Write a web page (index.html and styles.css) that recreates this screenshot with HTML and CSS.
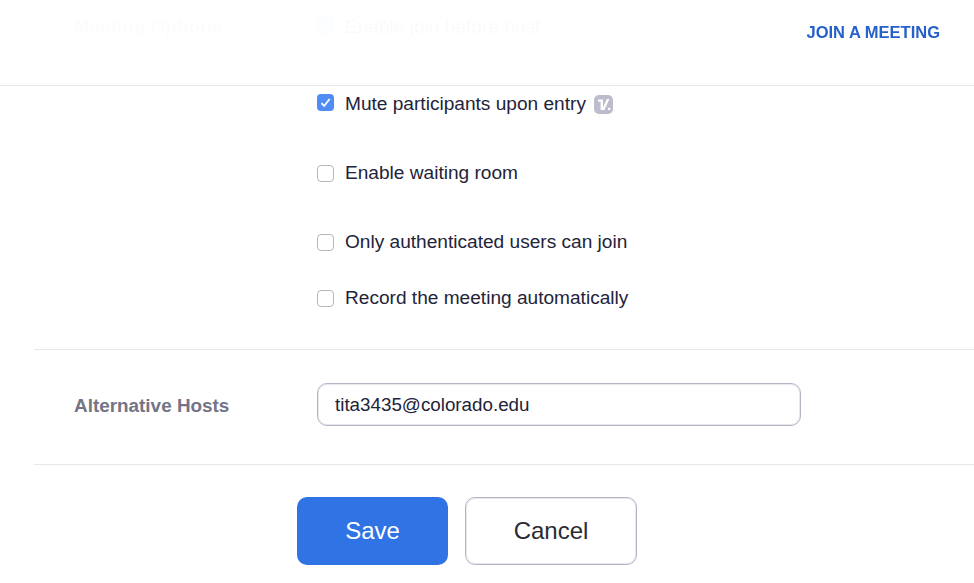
FILE: index.html
```html
<!DOCTYPE html>
<html lang="en">
    <head>
        <meta charset="UTF-8">
        <title>Meeting Options</title>
        <link rel="stylesheet" href="styles.css">
    </head>
    <body>
        <header class="topbar">
            <a class="join-link" href="#">JOIN A MEETING</a>
        </header>
        <main class="content">
            <section class="section section-options">
                <div class="section-label">Meeting Options</div>
                <div class="option-list">
                    <label class="option option-join">
                        <span class="box box-checked">
                            <svg viewBox="0 0 17 17" width="17" height="17"><path d="M4.4 9.2 7.2 12 12.6 5" fill="none" stroke="#fff" stroke-width="1.8"/></svg>
                        </span>
                        Enable join before host
                    </label>
                    <label class="option option-mute">
                        <span class="box box-checked">
                            <svg viewBox="0 0 17 17" width="17" height="17"><path d="M4.4 9.2 7.2 12 12.6 5" fill="none" stroke="#fff" stroke-width="1.8"/></svg>
                        </span>
                        Mute participants upon entry
                        <span class="info-badge">
                            <svg viewBox="0 0 19 19" width="19" height="19"><path d="M4.2 4.5H9V12.4L12.9 4H15.4L10.4 15H6.6V6.8H4.2ZM14 12.8H16.3V15H14Z" fill="#fff"/></svg>
                        </span>
                    </label>
                    <label class="option option-waiting">
                        <span class="box"></span>
                        Enable waiting room
                    </label>
                    <label class="option option-auth">
                        <span class="box"></span>
                        Only authenticated users can join
                    </label>
                    <label class="option option-record">
                        <span class="box"></span>
                        Record the meeting automatically
                    </label>
                </div>
            </section>
            <section class="section section-hosts">
                <div class="section-label">Alternative Hosts</div>
                <input class="host-input" type="text" value="tita3435@colorado.edu">
            </section>
            <div class="actions">
                <button class="button button-save">Save</button>
                <button class="button button-cancel">Cancel</button>
            </div>
        </main>
    </body>
</html>
```
FILE: styles.css
```css
*
{
    box-sizing: border-box;
    margin: 0;
    padding: 0;
}

html,
body
{
    height: 583px;
    overflow: hidden;
}

body
{
    background: #fff;
    color: #23233a;
    font-family: "Liberation Sans", Arial, sans-serif;
    font-size: 19.1px;
}

.topbar
{
    position: fixed;
    z-index: 2;

    top: 0;
    left: 0;
    right: 0;
    height: 86px;

    display: flex;
    justify-content: flex-end;
    padding: 22px 34px 0 0;

    background: rgba( 255, 255, 255, 0.98 );
    border-bottom: 1px solid #e8e8ea;
}

.join-link
{
    color: #2561c9;
    font-size: 16.5px;
    font-weight: bold;
    line-height: 20px;
    text-decoration: none;
}

.content
{
    padding: 16px 0 0 34px;
}

.section
{
    display: grid;
    grid-template-columns: 283px 1fr;
    border-bottom: 1px solid #e8e8ea;
}

.section-label
{
    padding-left: 40px;
    color: #747487;
    font-size: 18.9px;
    font-weight: bold;
    line-height: 22px;
}

.section-options
{
    height: 334px;
}

.option-list
{
    display: flex;
    flex-direction: column;
}

.option
{
    display: flex;
    align-items: center;
    height: 22px;
}

.option-mute
{
    margin-top: 55px;
}

.option-waiting
{
    margin-top: 47px;
}

.option-auth
{
    margin-top: 47px;
}

.option-record
{
    margin-top: 34px;
}

.box
{
    flex: none;
    height: 17px;
    width: 17px;
    margin-right: 11px;
    border: 1px solid #b5b5bd;
    border-radius: 4px;
    background: #fff;
}

.box-checked
{
    margin-bottom: 3px;
    border: 0;
    background: #4f8df5;
}

.box svg
{
    display: block;
}

.info-badge
{
    height: 19px;
    width: 19px;
    margin-left: 8px;
    border-radius: 5px;
    background: #bcbccd;
}

.info-badge svg
{
    display: block;
}

.section-hosts
{
    height: 115px;
    padding-bottom: 6px;
    align-items: center;
}

.section-hosts .section-label
{
    padding-top: 3px;
}

.host-input
{
    height: 43px;
    width: 484px;
    padding: 1px 17px 0;
    border: 1px solid #b4b4c6;
    border-radius: 10px;
    background: #fff;
    box-shadow: inset 0 0 0 1px rgba( 188, 188, 205, 0.35 );
    color: #23233a;
    font: inherit;
    font-size: 18.8px;
}

.actions
{
    display: flex;
    gap: 17px;
    margin: 32px 0 0 263px;
}

.button
{
    height: 68px;
    border-radius: 10px;
    font-family: inherit;
    font-size: 24px;
}

.button-save
{
    width: 151px;
    border: 0;
    background: #2f73e4;
    color: #fff;
}

.button-cancel
{
    width: 172px;
    border: 1px solid #b4b4c6;
    background: #fff;
    box-shadow: inset 0 0 0 1px rgba( 188, 188, 205, 0.35 );
    color: #2b2b33;
}
```
